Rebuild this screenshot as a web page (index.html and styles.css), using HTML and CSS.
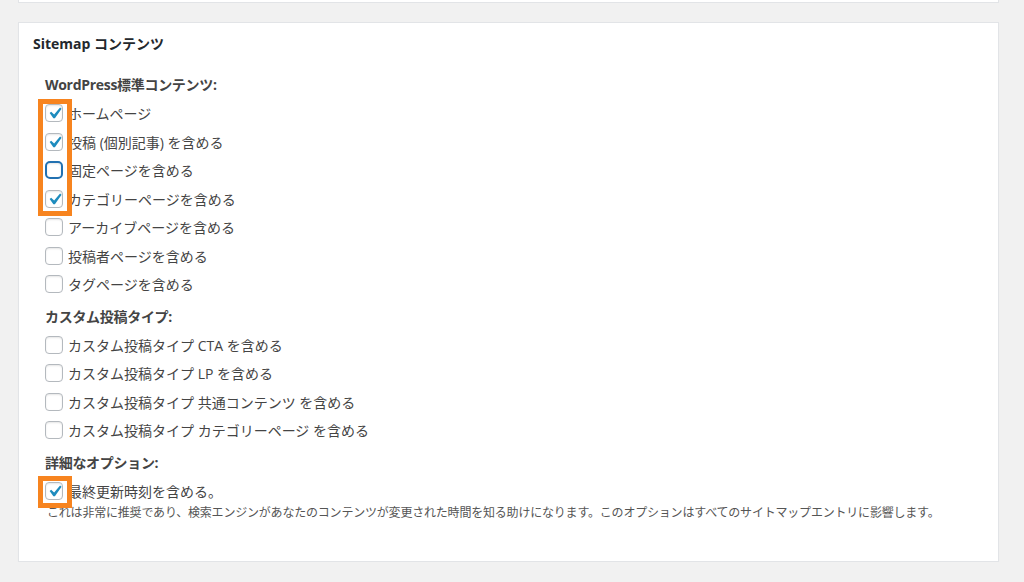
FILE: index.html
```html
<!DOCTYPE html>
<html lang="ja">

<head>
    <meta charset="UTF-8" />
    <meta name="viewport" content="width=device-width, initial-scale=1.0" />
    <title>Sitemap コンテンツ</title>
    <link rel="stylesheet" href="styles.css">
</head>

<body>
    <div class="prev-box"></div>

    <div class="postbox">
        <h2 class="hndle">Sitemap コンテンツ</h2>
        <div class="inside">
            <div class="mark mark-top"></div>
            <div class="mark mark-bottom"></div>

            <div class="group-title">WordPress標準コンテンツ:</div>
            <label class="row"><span class="cb checked"><svg viewBox="0 0 20 20"><path d="M14.83 4.89l1.34.94-5.81 8.38H9.02L5.78 9.67l1.34-1.25 2.57 2.4z"/></svg></span>ホームページ</label>
            <label class="row"><span class="cb checked"><svg viewBox="0 0 20 20"><path d="M14.83 4.89l1.34.94-5.81 8.38H9.02L5.78 9.67l1.34-1.25 2.57 2.4z"/></svg></span>投稿 (個別記事) を含める</label>
            <label class="row"><span class="cb focus"></span>固定ページを含める</label>
            <label class="row"><span class="cb checked"><svg viewBox="0 0 20 20"><path d="M14.83 4.89l1.34.94-5.81 8.38H9.02L5.78 9.67l1.34-1.25 2.57 2.4z"/></svg></span>カテゴリーページを含める</label>
            <label class="row"><span class="cb"></span>アーカイブページを含める</label>
            <label class="row"><span class="cb"></span>投稿者ページを含める</label>
            <label class="row"><span class="cb"></span>タグページを含める</label>

            <div class="group-title">カスタム投稿タイプ:</div>
            <label class="row"><span class="cb"></span>カスタム投稿タイプ CTA を含める</label>
            <label class="row"><span class="cb"></span>カスタム投稿タイプ LP を含める</label>
            <label class="row"><span class="cb"></span>カスタム投稿タイプ 共通コンテンツ を含める</label>
            <label class="row"><span class="cb"></span>カスタム投稿タイプ カテゴリーページ を含める</label>

            <div class="group-title">詳細なオプション:</div>
            <label class="row"><span class="cb checked"><svg viewBox="0 0 20 20"><path d="M14.83 4.89l1.34.94-5.81 8.38H9.02L5.78 9.67l1.34-1.25 2.57 2.4z"/></svg></span>最終更新時刻を含める。</label>
            <p class="desc">これは非常に推奨であり、検索エンジンがあなたのコンテンツが変更された時間を知る助けになります。このオプションはすべてのサイトマップエントリに影響します。</p>
        </div>
    </div>
</body>

</html>
```

FILE: styles.css
```css
/* Reset */
* {
    margin: 0;
    padding: 0;
    box-sizing: border-box;
}

body {
    font-family: "Open Sans", "Noto Sans CJK JP", sans-serif;
    font-size: 14px;
    background-color: #f1f1f1;
    color: #444;
    padding: 0 25px 0 18px;
}

/* box above, cut off by the top edge */
.prev-box {
    height: 3px;
    background-color: #fff;
    border: 1px solid #e2e4e7;
    border-top: none;
}

.postbox {
    margin-top: 19px;
    height: 540px;
    background-color: #fff;
    border: 1px solid #e2e4e7;
    box-shadow: 0 1px 1px rgba(0, 0, 0, 0.04);
}

.hndle {
    font-size: 14px;
    font-weight: 700;
    color: #23282d;
    line-height: 20px;
    padding: 11px 14px 0;
}

.inside {
    position: relative;
    padding: 17px 26px 0;
}

.group-title {
    font-weight: 700;
    line-height: 28px;
    color: #444;
    letter-spacing: -0.3px;
}

.row + .group-title {
    margin-top: 4px;
}

.row {
    display: flex;
    align-items: center;
    height: 28.5px;
}

/* checkbox */
.cb {
    width: 18px;
    height: 18px;
    border: 1px solid #b4b9be;
    border-radius: 4px;
    background-color: #fff;
    box-shadow: inset 0 1px 2px rgba(0, 0, 0, 0.1);
    margin-right: 5px;
    flex-shrink: 0;
    position: relative;
}

.cb svg {
    position: absolute;
    left: -3px;
    top: -3px;
    width: 23px;
    height: 23px;
    fill: #1e8cbe;
}

.cb.focus {
    border: 2px solid #2271b1;
    border-radius: 5px;
}

.desc {
    font-size: 12px;
    line-height: 16px;
    color: #555;
    letter-spacing: -0.2px;
    margin-left: 2px;
}

/* orange annotation frames */
.mark {
    position: absolute;
    left: 19px;
    width: 34px;
    border: 5px solid #f7841f;
}

.mark-top {
    top: 45px;
    height: 117px;
}

.mark-bottom {
    top: 422px;
    height: 32px;
}
```
